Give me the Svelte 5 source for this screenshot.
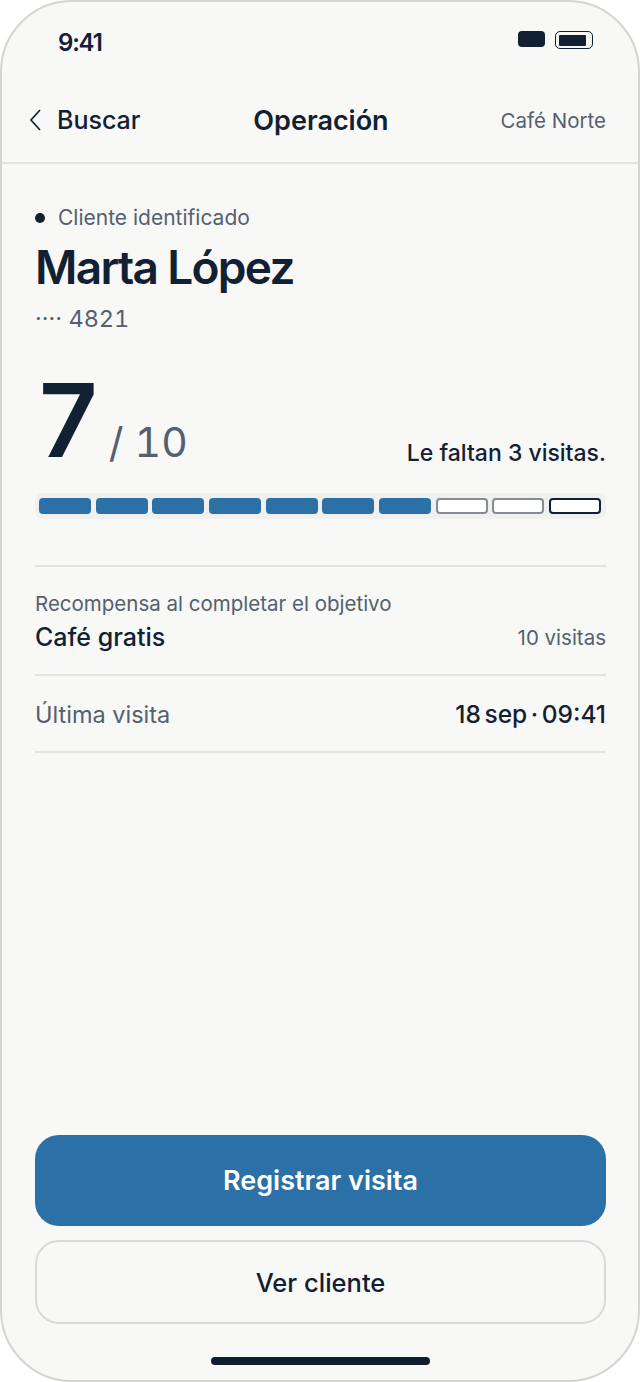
<script>
  const segments = ['on','on','on','on','on','on','on','off','off','next'];
</script>

<div class="phone">
  <div class="status">
    <span class="time">9:41</span>
    <div class="status-icons">
      <span class="signal"></span>
      <span class="battery"><span class="level"></span></span>
    </div>
  </div>

  <header class="nav">
    <div class="back">
      <svg width="14" height="22" viewBox="0 0 14 22" fill="none"><path d="M12 1 3 11l9 10" stroke="#122033" stroke-width="1.7" /></svg>
      <span>Buscar</span>
    </div>
    <div class="title">Operación</div>
    <div class="shop">Café Norte</div>
  </header>

  <main class="content">
    <div class="ident"><span class="dot"></span>Cliente identificado</div>
    <h1>Marta López</h1>
    <div class="card-no">···· 4821</div>

    <div class="score">
      <div class="count"><span class="big">7</span><span class="of">/ 10</span></div>
      <div class="left">Le faltan 3 visitas.</div>
    </div>

    <div class="track">
      {#each segments as s}
        <span class="seg {s}"></span>
      {/each}
    </div>

    <div class="reward">
      <div class="reward-label">Recompensa al completar el objetivo</div>
      <div class="reward-row"><strong>Café gratis</strong><span>10 visitas</span></div>
    </div>

    <div class="last">
      <span>Última visita</span>
      <strong>18 sep · 09:41</strong>
    </div>

    <div class="actions">
      <button class="primary">Registrar visita</button>
      <button class="secondary">Ver cliente</button>
    </div>
  </main>
  <div class="home"></div>
</div>

<style>
  :global(body) { margin: 0; background: #fff; }
  .phone {
    width: 640px; height: 1382px; box-sizing: border-box;
    border: 2px solid #d4d5ce; border-radius: 72px;
    background: #f8f8f6; color: #122033; overflow: hidden;
    display: flex; flex-direction: column; position: relative;
    font-family: Inter, "Liberation Sans", sans-serif;
  }
  .status { height: 80px; flex: none; display: flex; justify-content: space-between; align-items: center; padding: 0 45px 0 56px; box-sizing: border-box; }
  .time { font-size: 24px; font-weight: 600; letter-spacing: -1.2px; }
  .status-icons { display: flex; gap: 10px; align-items: flex-start; margin-bottom: 4px; }
  .signal { width: 27px; height: 16px; background: #122033; border-radius: 4px; }
  .battery { width: 38px; height: 18px; box-sizing: border-box; border: 1.5px solid #122033; border-radius: 5px; padding: 2.5px; display: flex; }
  .level { width: 27px; background: #122033; border-radius: 1px; }
  .nav { height: 76px; flex: none; border-bottom: 2px solid #e2e3e1; display: grid; grid-template-columns: 1fr auto 1fr; align-items: center; padding: 0 32px 4px; }
  .back { display: flex; align-items: center; gap: 15px; margin-left: -6px; font-size: 25px; font-weight: 500; }
  .title { font-size: 27px; font-weight: 600; margin-left: 2px; }
  .shop { text-align: right; font-size: 20.5px; color: #55606f; }
  .content { flex: 1; display: flex; flex-direction: column; padding: 0 32px 56px 33px; }
  .ident { display: flex; align-items: center; gap: 13px; font-size: 21px; color: #55606f; margin-top: 41px; }
  .dot { width: 10px; height: 10px; border-radius: 50%; background: #122033; }
  h1 { margin: 9px 0 0; font-size: 46px; font-weight: 600; line-height: 56px; letter-spacing: -1.7px; }
  .card-no { font-size: 23.5px; color: #55606f; margin-top: 9px; font-feature-settings: "tnum"; }
  .score { display: flex; justify-content: space-between; align-items: flex-end; margin-top: 35px; }
  .count { display: flex; align-items: baseline; gap: 11px; padding-left: 4px; }
  .big { font-size: 102px; font-weight: 600; line-height: 104px; }
  .of { font-size: 41px; color: #55606f; font-feature-settings: "tnum"; }
  .left { font-size: 23px; font-weight: 500; padding-bottom: 5px; }
  .track { display: grid; grid-template-columns: repeat(10, 1fr); gap: 4.5px; margin-top: 21px; padding: 5px 5px 5px 4px; background: #f0f0ee; border-radius: 8px; }
  .seg { height: 16px; box-sizing: border-box; border-radius: 4px; }
  .on { background: #2b70a6; }
  .off { background: #fff; border: 2px solid #858c97; }
  .next { background: #fff; border: 2.5px solid #122033; }
  .reward { margin-top: 46px; border-top: 2px solid #e2e3e1; padding: 24px 0 22px; }
  .reward-label { font-size: 20.5px; color: #55606f; }
  .reward-row { display: flex; justify-content: space-between; align-items: center; margin-top: 6px; }
  .reward-row strong { font-size: 25px; font-weight: 500; }
  .reward-row span { font-size: 20.5px; color: #55606f; }
  .last { display: flex; justify-content: space-between; align-items: center; height: 74px; padding-top: 1px; border-top: 2px solid #e2e3e1; border-bottom: 2px solid #e2e3e1; font-size: 23.5px; color: #55606f; }
  .last strong { font-size: 24.5px; font-weight: 500; color: #122033; word-spacing: -3px; }
  .actions { margin-top: auto; display: flex; flex-direction: column; gap: 14px; }
  button { font-family: inherit; border-radius: 24px; font-size: 25.5px; font-weight: 500; }
  .primary { height: 91px; background: #2b70a6; border: none; color: #fff; font-size: 27px; font-weight: 600; }
  .secondary { height: 84px; background: transparent; border: 2px solid #d9d9d6; color: #122033; }
  .home { position: absolute; left: 209px; bottom: 15px; width: 219px; height: 8px; border-radius: 4px; background: #0f1d2f; }
</style>
